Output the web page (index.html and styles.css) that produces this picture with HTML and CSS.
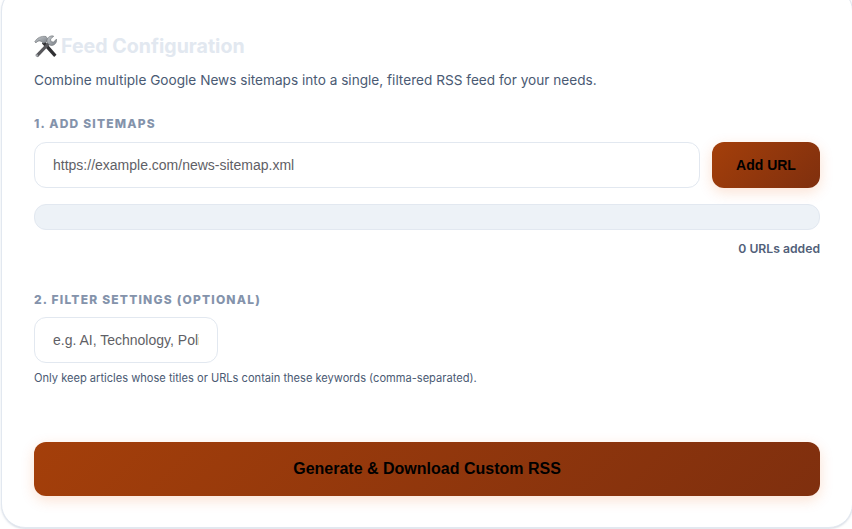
FILE: index.html
```html
<!DOCTYPE html>
<html lang="en">
<head>
<meta charset="utf-8">
<title>Feed Configuration</title>
<link rel="stylesheet" href="styles.css">
</head>
<body>
<main class="card">
  <h2 class="title">
    <svg class="tools" viewBox="0 0 24 24" aria-hidden="true">
      <defs>
        <linearGradient id="steel" x1="0" y1="0" x2="1" y2="1"><stop offset="0" stop-color="#c6cace"/><stop offset="1" stop-color="#7a8087"/></linearGradient>
      </defs>
      <path d="M21 23 8.300 8.800l2.700-2.500 12.500 14.300z" fill="#303033"/>
      <path d="M.8 7C3 3 7.500.6 12.600 1.600l1.800 2.600-1.800 3.600-3 .7-1.900-1.800C5.600 5.500 3.500 6.300 2 8.300z" fill="url(#steel)" stroke="#5a5e64" stroke-width=".5"/>
      <path d="M1.500 20.800 14.300 7.600l2.300 2.200L4 23.200z" fill="#58585c"/>
      <path d="M13.800 8c-1-3 .8-6.300 4-7 1-.2 2-.1 2.800.3l-3.300 3 .5 2.600 2.600.5 3-3.100c.6 2.100-.2 4.400-2.100 5.700-1.600 1.200-3.600 1.200-5.200.5z" fill="url(#steel)" stroke="#5a5e64" stroke-width=".5"/>
      <circle cx="3" cy="21.300" r="1.300" fill="#a0a4a9"/>
    </svg>
    <span>Feed Configuration</span>
  </h2>
  <p class="intro">Combine multiple Google News sitemaps into a single, filtered RSS feed for your needs.</p>

  <section class="sitemaps">
    <h3 class="label">1. Add Sitemaps</h3>
    <div class="url-row">
      <input class="field field-url" type="text" placeholder="https://example.com/news-sitemap.xml">
      <button class="btn btn-add" type="button">Add URL</button>
    </div>
    <div class="url-list"></div>
    <p class="count">0 URLs added</p>
  </section>

  <section class="filters">
    <h3 class="label">2. Filter Settings (Optional)</h3>
    <input class="field field-keyword" type="text" placeholder="e.g. AI, Technology, Politics">
    <p class="hint">Only keep articles whose titles or URLs contain these keywords (comma-separated).</p>
  </section>

  <button class="btn btn-generate" type="button">Generate &amp; Download Custom RSS</button>
</main>
</body>
</html>
```
FILE: styles.css
```css
* { box-sizing: border-box; }
html, body { margin: 0; height: 529px; overflow: hidden; background: #fff; }
body { font-family: Inter, "Liberation Sans", sans-serif; padding-left: 1px; }
.card {
  width: 852px;
  height: 541px;
  margin-top: -13px;
  padding: 45px 32px 0;
  background: #fff;
  border: 1px solid #e2e8f0;
  border-radius: 24px;
  box-shadow: 0 1px 2px rgba(148, 163, 184, 0.35);
  display: flex;
  flex-direction: column;
}
.title {
  margin: 0;
  display: flex;
  align-items: center;
  gap: 4px;
  height: 26px;
  font-size: 19.600px;
  font-weight: 700;
  color: #e2e8f0;
}
.tools { width: 23px; height: 23px; flex: none; }
.intro { margin: 11px 0 0; font-size: 13.630px; line-height: 20px; color: #4a5a73; }
.sitemaps { margin-top: 26px; }
.label {
  margin: 0;
  font-size: 12px;
  line-height: 16px;
  font-weight: 800;
  letter-spacing: 1.200px;
  text-transform: uppercase;
  color: #8493ab;
}
.url-row { display: flex; gap: 12px; margin-top: 10px; }
.field {
  height: 46px;
  padding: 0 18px;
  background: #fff;
  border: 1px solid #e2e8f0;
  border-radius: 12px;
  font-family: "Liberation Sans", Arial, sans-serif;
  font-size: 14px;
  color: #1e293b;
  outline: none;
}
.field::placeholder { color: #5f5f66; opacity: 1; }
.field-url { flex: 1; min-width: 0; }
.btn {
  border: 0;
  border-radius: 12px;
  background: linear-gradient(135deg, #a43f0a, #7f2f0e);
  color: #000;
  font-family: "Liberation Sans", Arial, sans-serif;
  font-weight: 700;
  box-shadow: 0 4px 14px rgba(234, 88, 12, 0.18);
}
.btn-add { width: 108px; height: 46px; font-size: 14px; }
.url-list {
  height: 26px;
  margin-top: 16px;
  background: #edf2f7;
  border: 1px solid #e2e8f0;
  border-radius: 12px;
}
.count {
  margin: 11px 0 0;
  text-align: right;
  font-size: 12.200px;
  line-height: 16px;
  font-weight: 600;
  color: #526079;
}
.filters { margin-top: 35px; }
.field-keyword { display: block; width: 184px; margin-top: 9px; }
.hint { margin: 8px 0 0; font-size: 11.100px; line-height: 14px; color: #4a5a73; }
.btn-generate { width: 100%; height: 54px; margin-top: 57px; font-size: 16px; flex: none; }
```
